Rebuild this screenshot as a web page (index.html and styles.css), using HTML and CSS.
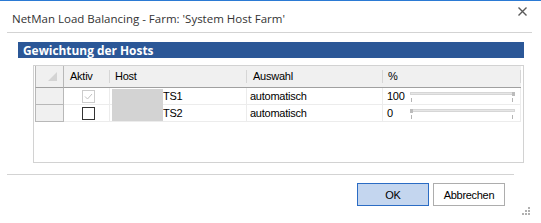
FILE: index.html
```html
<!DOCTYPE html>
<html lang="de">
<head>
<meta charset="utf-8">
<title>NetMan Load Balancing</title>
<link rel="stylesheet" href="styles.css">
</head>
<body>
<div class="window">
  <div class="titlebar">
    <span class="title">NetMan Load Balancing - Farm: 'System Host Farm'</span>
    <svg class="close" width="9" height="9" viewBox="0 0 9 9"><path d="M0.5 0.5 L8.5 8.5 M8.5 0.5 L0.5 8.5" stroke="#5a5a5a" stroke-width="1.4" fill="none"/></svg>
  </div>
  <div class="sep top-sep"></div>
  <div class="section-bar">Gewichtung der Hosts</div>
  <div class="panel">
    <div class="grid">
      <div class="hcell corner"><span class="tri"></span></div>
      <div class="hcell sepr">Aktiv</div>
      <div class="hcell sepr host-h">Host</div>
      <div class="hcell sepr">Auswahl</div>
      <div class="hcell sepr pct-h">%</div>

      <div class="rhead"></div>
      <div class="cell center"><span class="cb disabled"><svg width="11" height="11" viewBox="0 0 11 11"><path d="M2 5.5 L4.5 8 L9 3" stroke="#c2c2c2" stroke-width="1" fill="none"/></svg></span></div>
      <div class="cell host">TS1</div>
      <div class="cell">automatisch</div>
      <div class="cell pct"><span class="num">100</span><span class="track"><span class="thumb end"></span><span class="tick l"></span><span class="tick r"></span></span></div>

      <div class="rhead"></div>
      <div class="cell center"><span class="cb"></span></div>
      <div class="cell host">TS2</div>
      <div class="cell">automatisch</div>
      <div class="cell pct"><span class="num">0</span><span class="track"><span class="thumb start"></span><span class="tick l"></span><span class="tick r"></span></span></div>

      <div class="redact"></div>
    </div>
  </div>
  <div class="sep bottom-sep"></div>
  <div class="buttons">
    <button class="btn primary">OK</button>
    <button class="btn">Abbrechen</button>
  </div>
  <svg class="grip" width="9" height="9" viewBox="0 0 9 9" fill="#b0b0b0">
    <rect x="6" y="0" width="2" height="2"/>
    <rect x="3" y="3" width="2" height="2"/><rect x="6" y="3" width="2" height="2"/>
    <rect x="0" y="6" width="2" height="2"/><rect x="3" y="6" width="2" height="2"/><rect x="6" y="6" width="2" height="2"/>
  </svg>
</div>
</body>
</html>
```

FILE: styles.css
```css
html, body {
  margin: 0;
  padding: 0;
  background: #ffffff;
}
.window {
  position: relative;
  width: 541px;
  height: 223px;
  box-sizing: border-box;
  border-top: 1px solid #2b7ad4;
  background: #ffffff;
  font-family: "Liberation Sans", Arial, sans-serif;
  font-size: 11px;
  color: #000;
}
.titlebar {
  height: 31px;
  display: flex;
  justify-content: space-between;
  align-items: flex-start;
  padding: 0 14px 0 12px;
  box-sizing: border-box;
}
.title {
  font-family: "Open Sans", "Noto Sans", sans-serif;
  font-size: 11.5px;
  line-height: 16px;
  margin-top: 10px;
  color: #333333;
}
.close {
  margin-top: 6px;
}
.sep {
  height: 1px;
  background: #d3d3d3;
}
.top-sep {
  margin: 0 9px 0 7px;
}
.section-bar {
  margin: 9px 17px 0 18px;
  height: 16px;
  line-height: 16px;
  background: #2b5797;
  color: #ffffff;
  font-family: "Open Sans", "Noto Sans", sans-serif;
  font-weight: bold;
  font-size: 11.9px;
  padding-left: 5px;
}
.panel {
  margin: 7px 17px 0 33px;
  height: 98px;
  box-sizing: border-box;
  border: 1px solid #d2d2d2;
  padding: 0 0 0 1px;
}
.grid {
  position: relative;
  display: grid;
  grid-template-columns: 29px 46px 137px 136px 138px;
  grid-template-rows: 22px 17px 17px;
  letter-spacing: -0.25px;
}
.hcell {
  position: relative;
  background: #f0f0f0;
  border-bottom: 1px solid #a0a0a0;
  line-height: 21px;
  padding-left: 6px;
  box-sizing: border-box;
}
.hcell.sepr::after {
  content: "";
  position: absolute;
  right: 0;
  top: 4px;
  height: 13px;
  width: 1px;
  background: #d6d6d6;
}
.hcell.host-h { padding-left: 5px; }
.hcell.pct-h { padding-left: 5px; }
.corner {
  border-left: 1px solid #b8b8b8;
  border-right: 1px solid #b8b8b8;
  padding: 0;
}
.tri {
  position: absolute;
  right: 6px;
  bottom: 6px;
  width: 0;
  height: 0;
  border-left: 9px solid transparent;
  border-bottom: 9px solid #d4d4d4;
}
.rhead {
  background: #f0f0f0;
  border-left: 1px solid #b8b8b8;
  border-right: 1px solid #b8b8b8;
  border-bottom: 1px solid #b8b8b8;
  box-sizing: border-box;
}
.cell {
  border-bottom: 1px solid #ececec;
  border-right: 1px solid #ececec;
  box-sizing: border-box;
  line-height: 16px;
  padding-left: 3px;
  white-space: nowrap;
}
.cell.center {
  display: flex;
  justify-content: center;
  align-items: center;
  padding: 0;
}
.cell.host {
  padding-left: 53px;
}
.cb {
  display: block;
  width: 13px;
  height: 13px;
  box-sizing: border-box;
  border: 1px solid #333333;
  background: #fff;
  margin-left: 3px;
}
.cb.disabled {
  border-color: #cccccc;
}
.cb svg { display: block; }
.cell.pct {
  display: flex;
  align-items: flex-start;
  padding-left: 4px;
}
.num {
  width: 23px;
}
.track {
  position: relative;
  display: block;
  margin-top: 4px;
  width: 105px;
  height: 3px;
  box-sizing: border-box;
  background: #e6e6e6;
  border: 1px solid #d6d6d6;
}
.thumb {
  position: absolute;
  top: -1px;
  width: 3px;
  height: 4px;
  background: #bcbcbc;
}
.thumb.end { right: -1px; }
.thumb.start { left: -1px; }
.tick {
  position: absolute;
  top: 5px;
  width: 1px;
  height: 4px;
  background: #b4b4b4;
}
.tick.l { left: 0; }
.tick.r { right: 1px; }
.redact {
  position: absolute;
  left: 77px;
  top: 23px;
  width: 51px;
  height: 32px;
  background: #d3d3d3;
}
.bottom-sep {
  margin: 11px 27px 0 7px;
}
.buttons {
  display: flex;
  justify-content: flex-end;
  gap: 4px;
  margin: 8px 36px 0 0;
}
.btn {
  width: 72px;
  height: 23px;
  box-sizing: border-box;
  border: 1px solid #adadad;
  background: #ffffff;
  font-family: "Liberation Sans", Arial, sans-serif;
  font-size: 11px;
  letter-spacing: -0.3px;
  color: #000;
  padding: 0;
  margin: 0;
}
.btn.primary {
  background: #c4d6ef;
  border-color: #2b6cc4;
}
.grip {
  position: absolute;
  right: 10px;
  bottom: 7px;
}
```
